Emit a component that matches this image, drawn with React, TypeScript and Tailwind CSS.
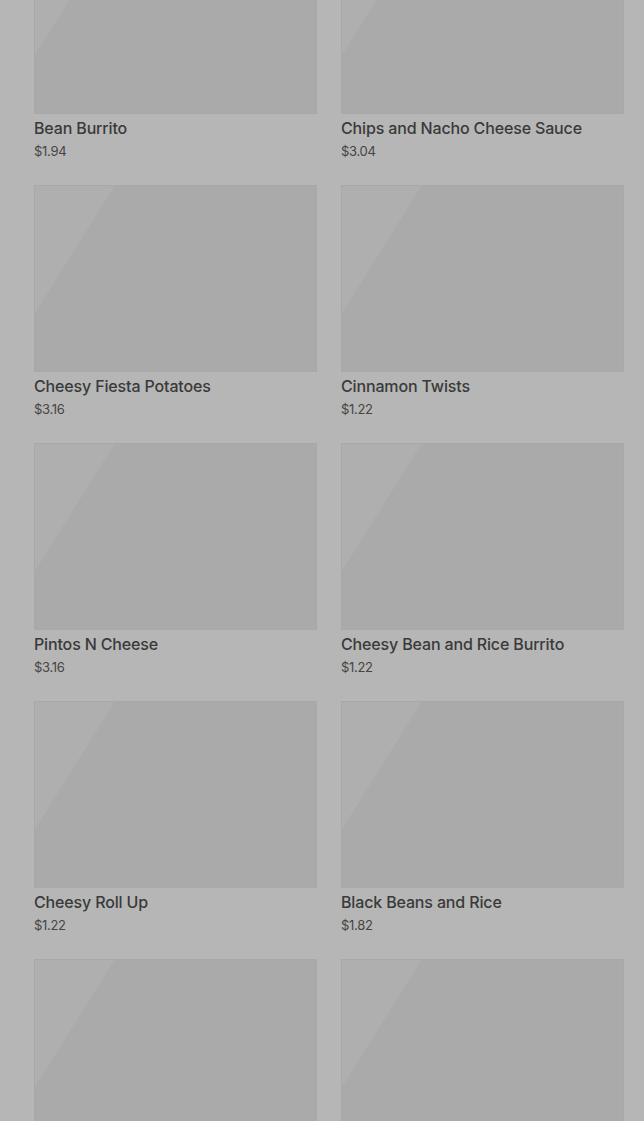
import React from 'react';

const items = [
  { name: 'Bean Burrito', price: '$1.94' },
  { name: 'Chips and Nacho Cheese Sauce', price: '$3.04' },
  { name: 'Cheesy Fiesta Potatoes', price: '$3.16' },
  { name: 'Cinnamon Twists', price: '$1.22' },
  { name: 'Pintos N Cheese', price: '$3.16' },
  { name: 'Cheesy Bean and Rice Burrito', price: '$1.22' },
  { name: 'Cheesy Roll Up', price: '$1.22' },
  { name: 'Black Beans and Rice', price: '$1.82' },
  { name: '', price: '' },
  { name: '', price: '' },
];

const App: React.FC = () => {
  return (
    <div className="min-h-screen h-[1121px] overflow-hidden bg-[#b6b6b6] font-['Inter','Liberation_Sans',sans-serif]">
      <div className="grid grid-cols-2 gap-x-6 gap-y-[25px] pl-[34px] pr-[20px] -mt-[73px]">
        {items.map((item, i) => (
          <div key={i} className="flex flex-col">
            {/* placeholder image */}
            <div className="h-[187px] w-full border border-[#a8a8a8] bg-[linear-gradient(122deg,#afafaf_20%,#aaaaaa_20%)]" />
            <div className="mt-[3px] text-[16px] leading-[22px] font-medium text-[#3a3a3a] tracking-[-0.15px]">
              {item.name}
            </div>
            <div className="mt-[3px] text-[13px] leading-[18px] text-[#454545] tracking-[-0.3px]">
              {item.price}
            </div>
          </div>
        ))}
      </div>
    </div>
  );
};

export default App;
